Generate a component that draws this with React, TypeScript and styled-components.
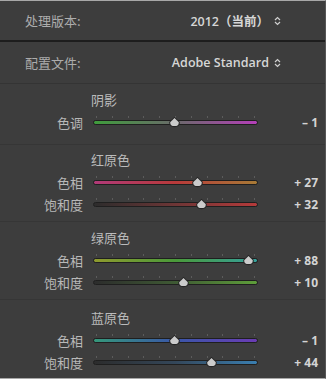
import styled, { createGlobalStyle } from 'styled-components'

const Global = createGlobalStyle`
	body {
		margin: 0;
		background: #3d3d3d;
		font-family: 'Noto Sans CJK SC', 'Noto Sans', sans-serif;
	}
`

type SliderData = { label: string; value: number; from: string; mid: string; to: string }
type SectionData = { title: string; pt: number; pb: number; sliders: SliderData[] }

const sections: SectionData[] = [
	{
		title: '阴影',
		pt: 6,
		pb: 11,
		sliders: [{ label: '色调', value: -1, from: '#3f9c3c', mid: '#6a6a6a', to: '#b43fb8' }],
	},
	{
		title: '红原色',
		pt: 5,
		pb: 6,
		sliders: [
			{ label: '色相', value: 27, from: '#b03a78', mid: '#b83a3a', to: '#a77a36' },
			{ label: '饱和度', value: 32, from: '#2c2c2c', mid: '#6e3636', to: '#b53a3a' },
		],
	},
	{
		title: '绿原色',
		pt: 6,
		pb: 6,
		sliders: [
			{ label: '色相', value: 88, from: '#8f9a2e', mid: '#4a9a3a', to: '#35a09c' },
			{ label: '饱和度', value: 10, from: '#2c2c2c', mid: '#3f5a34', to: '#5e9e3a' },
		],
	},
	{
		title: '蓝原色',
		pt: 8,
		pb: 5,
		sliders: [
			{ label: '色相', value: -1, from: '#35987a', mid: '#3a56a8', to: '#6a3cb4' },
			{ label: '饱和度', value: 44, from: '#2c2c2c', mid: '#34475a', to: '#3a7eb0' },
		],
	},
]

const Panel = styled.div`
	width: 325px;
	height: 377px;
	border-top: 1px solid #a8a8a8;
	border-bottom: 1px solid #a8a8a8;
	border-right: 1px solid #565656;
	background: #3d3d3d;
	display: flex;
	flex-direction: column;
	overflow: hidden;
`

const TopRow = styled.div<{ $border: string; $h: number }>`
	height: ${(p) => p.$h}px;
	flex: none;
	display: flex;
	align-items: center;
	justify-content: space-between;
	padding: 0 44px 0 25px;
	border-bottom: ${(p) => p.$border};
`

const TopLabel = styled.span`
	font-size: 13px;
	color: #acacac;
`

const TopValue = styled.span`
	display: flex;
	align-items: center;
	gap: 5px;
	font-size: 12.5px;
	font-weight: 600;
	color: #d6d6d6;
	font-family: 'Open Sans', 'Noto Sans CJK SC', sans-serif;
`

const Section = styled.div<{ $pt: number; $pb: number; $last?: boolean }>`
	flex: none;
	padding: ${(p) => p.$pt}px 0 ${(p) => p.$pb}px;
	border-bottom: ${(p) => (p.$last ? 'none' : '1px solid #363636')};
`

const Header = styled.div`
	height: 20px;
	line-height: 20px;
	margin-bottom: 1px;
	padding-left: 91px;
	font-size: 13px;
	color: #bbbbbb;
`

const Row = styled.div`
	height: 22px;
	display: grid;
	grid-template-columns: 83px 165px 50px;
	column-gap: 10px;
	align-items: center;
`

const Label = styled.span`
	text-align: right;
	font-size: 13px;
	color: #b8b8b8;
`

const Value = styled.span`
	text-align: right;
	font-family: 'Open Sans', sans-serif;
	font-weight: 700;
	font-size: 12px;
	color: #d4d4d4;
	white-space: pre;
`

const TrackWrap = styled.div`
	position: relative;
	height: 22px;
`

const Ticks = styled.div`
	position: absolute;
	left: 3px;
	right: 3px;
	top: 5px;
	height: 2px;
	display: flex;
	justify-content: space-between;
	& > i {
		width: 1px;
		height: 2px;
		background: #5c5c5c;
	}
`

const Track = styled.div<{ $from: string; $mid: string; $to: string }>`
	position: absolute;
	left: 0;
	right: 0;
	top: 9px;
	height: 5px;
	border-radius: 3px;
	border: 1px solid #1f1f1f;
	box-sizing: border-box;
	background: linear-gradient(to right, ${(p) => p.$from}, ${(p) => p.$mid}, ${(p) => p.$to});
`

const Thumb = styled.svg`
	position: absolute;
	top: 5px;
	width: 13px;
	height: 12px;
	margin-left: -6.5px;
`

const Chevrons = () => (
	<svg width="7" height="10" viewBox="0 0 7 10">
		<path d="M1 4 L3.5 1.5 L6 4" fill="none" stroke="#cfcfcf" strokeWidth="1.2" />
		<path d="M1 6 L3.5 8.5 L6 6" fill="none" stroke="#cfcfcf" strokeWidth="1.2" />
	</svg>
)

const fmt = (v: number) => (v < 0 ? `– ${-v}` : `+ ${v}`)

const Slider = ({ s }: { s: SliderData }) => (
	<Row>
		<Label>{s.label}</Label>
		<TrackWrap>
			<Ticks>
				{Array.from({ length: 11 }).map((_, i) => (
					<i key={i} />
				))}
			</Ticks>
			<Track $from={s.from} $mid={s.mid} $to={s.to} />
			<Thumb viewBox="0 0 13 12" style={{ left: `${50 + s.value / 2}%` }}>
				<path d="M6.5 0.8 L11.8 6 Q12 11.2 6.5 11.2 Q1 11.2 1.2 6 Z" fill="#262626" />
				<path d="M6.5 1.9 L10.8 6.2 Q11 10.1 6.5 10.1 Q2 10.1 2.2 6.2 Z" fill="#cbcbcb" />
			</Thumb>
		</TrackWrap>
		<Value>{fmt(s.value)}</Value>
	</Row>
)

const App = () => (
	<>
		<Global />
		<Panel>
			<TopRow $h={39} $border="2px solid #1d1d1d">
				<TopLabel>处理版本:</TopLabel>
				<TopValue>
					2012（当前）
					<Chevrons />
				</TopValue>
			</TopRow>
			<TopRow $h={41} $border="1px solid #343434">
				<TopLabel>配置文件:</TopLabel>
				<TopValue>
					Adobe Standard
					<Chevrons />
				</TopValue>
			</TopRow>
			{sections.map((sec, i) => (
				<Section key={sec.title} $pt={sec.pt} $pb={sec.pb} $last={i === sections.length - 1}>
					<Header>{sec.title}</Header>
					{sec.sliders.map((s) => (
						<Slider key={s.label} s={s} />
					))}
				</Section>
			))}
		</Panel>
	</>
)

export default App
